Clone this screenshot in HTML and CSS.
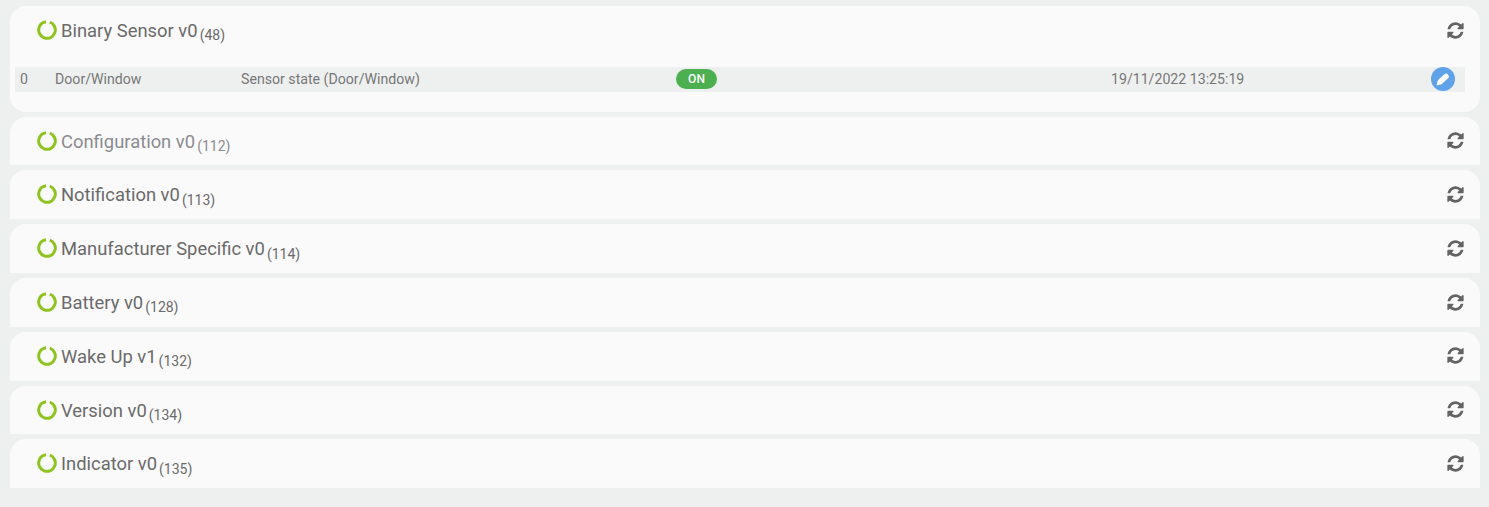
FILE: index.html
```html
<!DOCTYPE html>
<html lang="en">
<head>
  <meta charset="UTF-8" />
  <title>Command Classes</title>
  <link rel="stylesheet" href="styles.css">
</head>
<body>
  <svg class="defs" width="0" height="0">
    <symbol id="refresh" viewBox="0 0 1792 1792">
      <path d="M1639 1056q0 5-1 7-64 268-268 434.5t-478 166.5q-146 0-282.5-55t-243.5-157l-129 129q-19 19-45 19t-45-19-19-45v-448q0-26 19-45t45-19h448q26 0 45 19t19 45-19 45l-137 137q71 66 161 102t187 36q134 0 250-65t186-179q11-17 53-117 8-23 30-23h192q13 0 22.5 9.5t9.5 22.5zm25-800v448q0 26-19 45t-45 19h-448q-26 0-45-19t-19-45 19-45l138-138q-148-137-349-137-134 0-250 65t-186 179q-11 17-53 117-8 23-30 23h-199q-13 0-22.5-9.5t-9.5-22.5v-7q65-268 270-434.5t480-166.5q146 0 284 55.5t245 156.5l130-129q19-19 45-19t45 19 19 45z"/>
    </symbol>
    <symbol id="ring" viewBox="0 0 20 20">
      <circle cx="10" cy="10" r="8.3" fill="none" stroke="#8fc31f" stroke-width="3" stroke-dasharray="48 4.2" transform="rotate(-70 10 10)"/>
    </symbol>
  </svg>

  <div class="list">
    <section class="card card-open">
      <div class="card-head">
        <svg class="ring"><use href="#ring"/></svg>
        <h3>Binary Sensor v0 <small>(48)</small></h3>
        <svg class="sync"><use href="#refresh"/></svg>
      </div>
      <div class="value-row">
        <span>0</span>
        <span>Door/Window</span>
        <span>Sensor state (Door/Window)</span>
        <span><b class="badge">ON</b></span>
        <span>19/11/2022 13:25:19</span>
        <span class="edit">
          <svg width="24" height="24" viewBox="0 0 24 24">
            <circle cx="12" cy="12" r="12" fill="#5fa2e8"/>
            <path d="M9.500 14.500L15 9.500" stroke="#fff" stroke-width="5.500" stroke-linecap="round"/>
            <path d="M5.500 18.500L7 13.500l3.500 3.500z" fill="#fff"/>
          </svg>
        </span>
      </div>
    </section>

    <section class="card">
      <div class="card-head">
        <svg class="ring"><use href="#ring"/></svg>
        <h3 class="muted">Configuration v0 <small>(112)</small></h3>
        <svg class="sync"><use href="#refresh"/></svg>
      </div>
    </section>
    <section class="card">
      <div class="card-head">
        <svg class="ring"><use href="#ring"/></svg>
        <h3>Notification v0 <small>(113)</small></h3>
        <svg class="sync"><use href="#refresh"/></svg>
      </div>
    </section>
    <section class="card">
      <div class="card-head">
        <svg class="ring"><use href="#ring"/></svg>
        <h3>Manufacturer Specific v0 <small>(114)</small></h3>
        <svg class="sync"><use href="#refresh"/></svg>
      </div>
    </section>
    <section class="card">
      <div class="card-head">
        <svg class="ring"><use href="#ring"/></svg>
        <h3>Battery v0 <small>(128)</small></h3>
        <svg class="sync"><use href="#refresh"/></svg>
      </div>
    </section>
    <section class="card">
      <div class="card-head">
        <svg class="ring"><use href="#ring"/></svg>
        <h3>Wake Up v1 <small>(132)</small></h3>
        <svg class="sync"><use href="#refresh"/></svg>
      </div>
    </section>
    <section class="card">
      <div class="card-head">
        <svg class="ring"><use href="#ring"/></svg>
        <h3>Version v0 <small>(134)</small></h3>
        <svg class="sync"><use href="#refresh"/></svg>
      </div>
    </section>
    <section class="card">
      <div class="card-head">
        <svg class="ring"><use href="#ring"/></svg>
        <h3>Indicator v0 <small>(135)</small></h3>
        <svg class="sync"><use href="#refresh"/></svg>
      </div>
    </section>
  </div>
</body>
</html>
```

FILE: styles.css
```css
:root {
  --page: #eef0ef;
  --card: #fafafa;
  --text: #6a6a6a;
}

body {
  margin: 0;
  padding: 6px 9px 19px 10px;
  background-color: var(--page);
  font-family: Roboto, "Liberation Sans", sans-serif;
  color: var(--text);
  overflow: hidden;
}

.defs {
  display: block;
}

.list {
  display: flex;
  flex-direction: column;
  gap: 5px;
}

.card {
  height: 48.8px;
  background: var(--card);
  border-radius: 16px 16px 0 0;
}

.card-open {
  height: 105.65px;
  border-radius: 16px;
}

.card-head {
  display: flex;
  align-items: flex-start;
  padding: 14px 15.5px 0 27px;
}

.ring {
  width: 20px;
  height: 20px;
  flex-shrink: 0;
  margin-right: 4px;
}

h3 {
  flex: 1;
  margin: 0;
  font-size: 18.4px;
  font-weight: 400;
  line-height: 21px;
}

h3.muted {
  color: #8b8b90;
}

h3 small {
  margin-left: -2.5px;
  font-size: 14px;
  vertical-align: -3.3px;
}

.sync {
  width: 19px;
  height: 19px;
  fill: #636363;
  margin-top: 0.5px;
}

.value-row {
  display: grid;
  grid-template-columns: 35px 186px 435px 435px 1fr 24px;
  align-items: center;
  height: 24px;
  margin: 21px 15px 0 5px;
  padding: 0 10px 1px 5px;
  background: var(--page);
  font-size: 14.15px;
  color: #777;
}

.badge {
  display: block;
  width: 41px;
  height: 20px;
  border-radius: 10px;
  background: #4caf50;
  color: #fff;
  font-size: 12px;
  font-weight: 500;
  line-height: 20px;
  text-align: center;
}

.edit {
  display: flex;
}
```
